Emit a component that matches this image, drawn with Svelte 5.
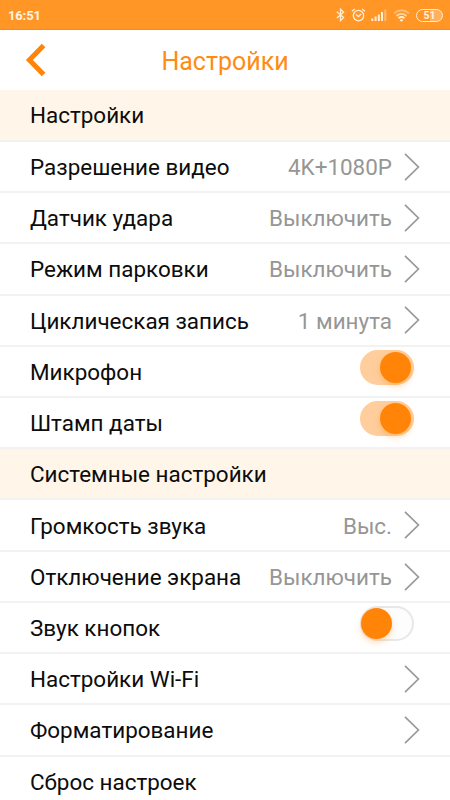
<script lang="ts">
    type Row = {
        label: string;
        kind: 'section' | 'link' | 'toggle' | 'plain';
        value?: string;
        on?: boolean;
    };

    let rows = $state<Row[]>([
        { label: 'Настройки', kind: 'section' },
        { label: 'Разрешение видео', kind: 'link', value: '4K+1080P' },
        { label: 'Датчик удара', kind: 'link', value: 'Выключить' },
        { label: 'Режим парковки', kind: 'link', value: 'Выключить' },
        { label: 'Циклическая запись', kind: 'link', value: '1 минута' },
        { label: 'Микрофон', kind: 'toggle', on: true },
        { label: 'Штамп даты', kind: 'toggle', on: true },
        { label: 'Системные настройки', kind: 'section' },
        { label: 'Громкость звука', kind: 'link', value: 'Выс.' },
        { label: 'Отключение экрана', kind: 'link', value: 'Выключить' },
        { label: 'Звук кнопок', kind: 'toggle', on: false },
        { label: 'Настройки Wi-Fi', kind: 'link' },
        { label: 'Форматирование', kind: 'link' },
        { label: 'Сброс настроек', kind: 'plain' },
    ]);
</script>

<div class="screen">
    <div class="status-bar">
        <span class="clock">16:51</span>
        <div class="status-icons">
            <svg class="bluetooth" width="9" height="14" viewBox="0 0 9 14">
                <path d="M0.8 3.8 L7.6 9.6 L4.5 12.6 V1.2 L7.6 4.2 L0.8 10" />
            </svg>
            <svg class="alarm" width="15" height="14" viewBox="0 0 15 14">
                <circle cx="7.5" cy="7.6" r="5.2" />
                <path d="M1 3.2 L3.9 0.9 M14 3.2 L11.1 0.9 M5 6.5 L7.4 8.6 L10.2 6" />
            </svg>
            <svg class="signal" width="16" height="12" viewBox="0 0 16 12">
                <path d="M0.3 9.5h2V12h-2z M3.6 7.6h2V12h-2z M6.8 5.4h2V12h-2z M10 3h2V12h-2z" />
                <path d="M13.3 0.5h2V12h-2z" opacity="0.4" />
            </svg>
            <svg class="wifi" width="17" height="13" viewBox="0 0 17 13">
                <path d="M1 4.4 Q8.5 -2 16 4.4" opacity="0.45" />
                <path d="M3.4 7 Q8.5 2.7 13.6 7" opacity="0.7" />
                <path d="M5.5 9.2 Q8.5 6.8 11.5 9.2" />
                <circle cx="8.5" cy="11.2" r="1.3" />
            </svg>
            <span class="battery">51</span>
        </div>
    </div>

    <header>
        <button type="button" class="back" aria-label="Назад">
            <svg width="22" height="34" viewBox="0 0 22 34">
                <path d="M18.6 2.5 L4.4 17 L18.6 31.5" />
            </svg>
        </button>
        <h1>Настройки</h1>
    </header>

    <main>
        {#each rows as row}
            <div class="row" class:section={row.kind === 'section'}>
                <span class="label">{row.label}</span>
                {#if row.value}
                    <span class="value">{row.value}</span>
                {/if}
                {#if row.kind === 'link'}
                    <svg class="chevron" width="16" height="28" viewBox="0 0 16 28">
                        <path d="M1 0.8 L14.4 14 L1 27.2" />
                    </svg>
                {:else if row.kind === 'toggle'}
                    <button
                        type="button"
                        class="toggle"
                        class:on={row.on}
                        aria-label={row.label}
                        onclick={() => (row.on = !row.on)}
                    >
                        <span class="thumb"></span>
                    </button>
                {/if}
            </div>
        {/each}
    </main>
</div>

<style>
    :global(body) {
        background: #fff;
        overflow: hidden;
    }

    .screen {
        height: 800px;
        overflow: hidden;
        background: #fff;
        font-family: Roboto, "Liberation Sans", sans-serif;
        color: #0c0c0c;
    }

    .status-bar {
        box-sizing: border-box;
        height: 30px;
        padding: 1px 7px 0 8px;
        display: flex;
        align-items: center;
        justify-content: space-between;
        background: #ff9626;
        border-bottom: 1px solid #fa8a14;
        color: #fff3e2;
    }

    .clock {
        font-size: 13px;
        font-weight: 700;
        letter-spacing: -0.15px;
    }

    .status-icons {
        display: flex;
        align-items: center;
    }

    .status-icons svg {
        fill: none;
        stroke: #ffefd9;
        stroke-width: 1.3;
    }

    .status-icons .alarm {
        margin-left: 6px;
    }

    .status-icons .signal {
        margin-left: 5px;
        fill: #ffefd9;
        stroke: none;
    }

    .status-icons .wifi {
        margin-left: 6px;
        stroke-width: 1.8;
    }

    .status-icons .wifi circle {
        fill: #ffefd9;
        stroke: none;
    }

    .battery {
        box-sizing: border-box;
        width: 27px;
        height: 13px;
        margin-left: 6px;
        border: 1px solid #ffefd9;
        border-radius: 7px;
        background: linear-gradient(90deg, transparent 52%, rgba(255, 239, 217, 0.3) 52%);
        font-size: 10.5px;
        font-weight: 700;
        line-height: 11px;
        text-align: center;
    }

    header {
        position: relative;
        height: 60px;
        display: flex;
        align-items: center;
        justify-content: center;
    }

    .back {
        position: absolute;
        left: 25px;
        top: 13px;
        padding: 0;
        border: none;
        background: none;
        line-height: 0;
        cursor: pointer;
    }

    .back path {
        fill: none;
        stroke: #ff8408;
        stroke-width: 5;
    }

    h1 {
        margin: 2px 0 0;
        font-size: 25px;
        font-weight: 400;
        color: #ff8c12;
    }

    .row {
        box-sizing: border-box;
        height: 51.24px;
        padding: 0 30px;
        display: flex;
        align-items: center;
        border-bottom: 2px solid #f2f2f2;
        font-size: 22.45px;
    }

    .row:first-child {
        height: 51.8px;
    }

    .row.section {
        background: #fff6e9;
    }

    .label {
        flex: 1;
        padding-top: 0.9px;
        white-space: nowrap;
    }

    .value {
        padding-top: 0.9px;
        color: #969696;
    }

    .chevron {
        margin: 0.6px 0 0 12px;
        fill: none;
        stroke: #999;
        stroke-width: 1.7;
    }

    .toggle {
        box-sizing: border-box;
        width: 54px;
        height: 35px;
        margin: 0 6px 8.4px 0;
        padding: 0;
        display: flex;
        align-items: center;
        border: 2px solid #e8e8e8;
        border-radius: 18px;
        background: #fdfdfd;
        cursor: pointer;
    }

    .toggle.on {
        padding-left: 19px;
        border-color: #ffce9c;
        background: #ffce9c;
    }

    .thumb {
        flex: none;
        width: 31px;
        height: 31px;
        margin: 0 0 0 -0.6px;
        border-radius: 50%;
        background: #ff8408;
        box-shadow: 0 3px 6px rgba(255, 132, 8, 0.3);
    }
</style>
